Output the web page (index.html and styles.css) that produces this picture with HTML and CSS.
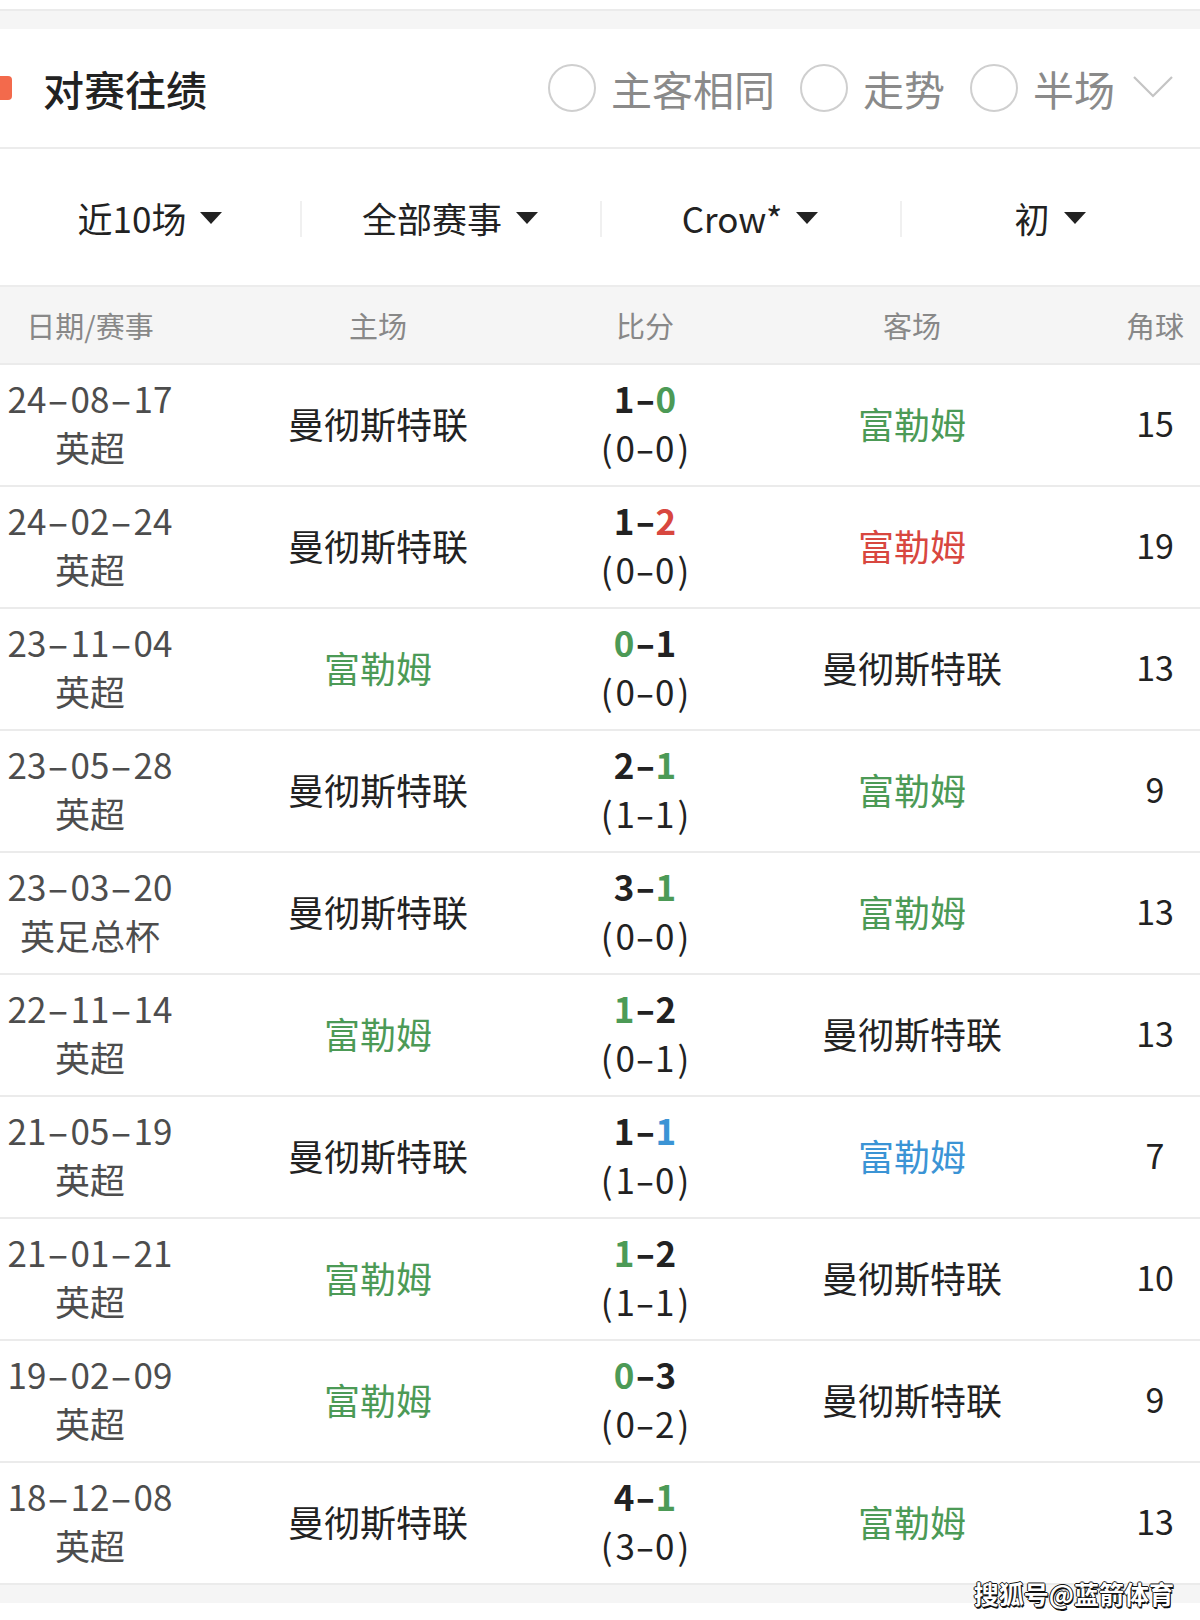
FILE: index.html
```html
<!DOCTYPE html>
<html lang="zh-CN">
<head>
<meta charset="utf-8">
<title>对赛往绩</title>
<link rel="stylesheet" href="styles.css">
</head>
<body>
<div class="page">
  <div class="top-white"></div>
  <div class="band"></div>

  <div class="header">
    <div class="title-wrap">
      <span class="marker"></span>
      <span class="title">对赛往绩</span>
    </div>
    <div class="options">
      <span class="radio"></span><span class="opt">主客相同</span>
      <span class="radio"></span><span class="opt">走势</span>
      <span class="radio"></span><span class="opt">半场</span>
      <svg class="chev" width="40" height="24" viewBox="0 0 40 24"><polyline points="1,2 20,21 39,2" fill="none" stroke="#c4c4c4" stroke-width="2.2"/></svg>
    </div>
  </div>

  <div class="filters">
    <div class="filter"><span>近10场</span><i class="tri"></i></div>
    <div class="filter div"><span>全部赛事</span><i class="tri"></i></div>
    <div class="filter div"><span>Crow*</span><i class="tri"></i></div>
    <div class="filter div"><span>初</span><i class="tri"></i></div>
  </div>

  <div class="thead">
    <div>日期/赛事</div><div>主场</div><div>比分</div><div>客场</div><div>角球</div>
  </div>

  <div class="tbody">
    <div class="row">
      <div class="date"><span>24<i>-</i>08<i>-</i>17</span><span>英超</span></div>
      <div class="team">曼彻斯特联</div>
      <div class="score"><b>1<i>-</i><em class="g">0</em></b><span>(0<i>-</i>0)</span></div>
      <div class="team g">富勒姆</div>
      <div class="corner">15</div>
    </div>
    <div class="row">
      <div class="date"><span>24<i>-</i>02<i>-</i>24</span><span>英超</span></div>
      <div class="team">曼彻斯特联</div>
      <div class="score"><b>1<i>-</i><em class="r">2</em></b><span>(0<i>-</i>0)</span></div>
      <div class="team r">富勒姆</div>
      <div class="corner">19</div>
    </div>
    <div class="row">
      <div class="date"><span>23<i>-</i>11<i>-</i>04</span><span>英超</span></div>
      <div class="team g">富勒姆</div>
      <div class="score"><b><em class="g">0</em><i>-</i>1</b><span>(0<i>-</i>0)</span></div>
      <div class="team">曼彻斯特联</div>
      <div class="corner">13</div>
    </div>
    <div class="row">
      <div class="date"><span>23<i>-</i>05<i>-</i>28</span><span>英超</span></div>
      <div class="team">曼彻斯特联</div>
      <div class="score"><b>2<i>-</i><em class="g">1</em></b><span>(1<i>-</i>1)</span></div>
      <div class="team g">富勒姆</div>
      <div class="corner">9</div>
    </div>
    <div class="row">
      <div class="date"><span>23<i>-</i>03<i>-</i>20</span><span>英足总杯</span></div>
      <div class="team">曼彻斯特联</div>
      <div class="score"><b>3<i>-</i><em class="g">1</em></b><span>(0<i>-</i>0)</span></div>
      <div class="team g">富勒姆</div>
      <div class="corner">13</div>
    </div>
    <div class="row">
      <div class="date"><span>22<i>-</i>11<i>-</i>14</span><span>英超</span></div>
      <div class="team g">富勒姆</div>
      <div class="score"><b><em class="g">1</em><i>-</i>2</b><span>(0<i>-</i>1)</span></div>
      <div class="team">曼彻斯特联</div>
      <div class="corner">13</div>
    </div>
    <div class="row">
      <div class="date"><span>21<i>-</i>05<i>-</i>19</span><span>英超</span></div>
      <div class="team">曼彻斯特联</div>
      <div class="score"><b>1<i>-</i><em class="b">1</em></b><span>(1<i>-</i>0)</span></div>
      <div class="team b">富勒姆</div>
      <div class="corner">7</div>
    </div>
    <div class="row">
      <div class="date"><span>21<i>-</i>01<i>-</i>21</span><span>英超</span></div>
      <div class="team g">富勒姆</div>
      <div class="score"><b><em class="g">1</em><i>-</i>2</b><span>(1<i>-</i>1)</span></div>
      <div class="team">曼彻斯特联</div>
      <div class="corner">10</div>
    </div>
    <div class="row">
      <div class="date"><span>19<i>-</i>02<i>-</i>09</span><span>英超</span></div>
      <div class="team g">富勒姆</div>
      <div class="score"><b><em class="g">0</em><i>-</i>3</b><span>(0<i>-</i>2)</span></div>
      <div class="team">曼彻斯特联</div>
      <div class="corner">9</div>
    </div>
    <div class="row">
      <div class="date"><span>18<i>-</i>12<i>-</i>08</span><span>英超</span></div>
      <div class="team">曼彻斯特联</div>
      <div class="score"><b>4<i>-</i><em class="g">1</em></b><span>(3<i>-</i>0)</span></div>
      <div class="team g">富勒姆</div>
      <div class="corner">13</div>
    </div>
  </div>

  <div class="bottom-band"></div>
  <div class="watermark">搜狐号@蓝箭体育</div>
</div>
</body>
</html>
```

FILE: styles.css
```css
* { box-sizing: border-box; }
html, body { margin: 0; padding: 0; background: #fff; }
body {
  font-family: "Noto Sans CJK SC", "Noto Sans", sans-serif;
  color: #222;
}
.page { position: relative; width: 1200px; height: 1620px; overflow: hidden; }

.top-white { height: 9px; background: #fff; }
.band { height: 20px; background: #f5f5f5; border-top: 2px solid #ebebeb; }

.header {
  height: 120px;
  display: flex;
  align-items: center;
  justify-content: space-between;
  border-bottom: 2px solid #ececec;
  padding-right: 27px;
}
.title-wrap { display: flex; align-items: center; }
.marker {
  width: 12px; height: 24px;
  background: #f36a4c;
  border-radius: 0 4px 4px 0;
  margin-right: 31px;
}
.title { font-size: 41px; font-weight: 500; color: #222; line-height: 1; }

.options { display: flex; align-items: center; }
.radio {
  width: 48px; height: 48px;
  border: 2px solid #cfcfcf;
  border-radius: 50%;
  margin-right: 15px;
}
.opt { font-size: 41px; color: #8a8a8a; line-height: 1; margin-right: 25px; }
.opt:last-of-type { margin-right: 18px; }
.chev { display: block; margin-top: -2px; }

.filters {
  height: 138px;
  display: grid;
  grid-template-columns: repeat(4, 1fr);
  border-bottom: 2px solid #ececec;
}
.filter {
  position: relative;
  display: flex;
  align-items: center;
  justify-content: center;
  font-size: 35px;
  color: #222;
}
.filter.div::before {
  content: "";
  position: absolute;
  left: 0; top: 52px;
  width: 2px; height: 36px;
  background: #f0f0f0;
}
.tri {
  width: 0; height: 0;
  border-left: 11px solid transparent;
  border-right: 11px solid transparent;
  border-top: 12px solid #222;
  margin-left: 14px;
  margin-top: 2px;
}

.thead, .row {
  display: grid;
  grid-template-columns: 180px 396px 138px 396px 90px;
}
.thead {
  height: 78px;
  background: #f5f5f5;
  align-items: center;
  font-size: 29px;
  color: #888;
  text-align: center;
  border-bottom: 2px solid #ebebeb;
}

.row {
  height: 122px;
  padding-bottom: 5px;
  border-bottom: 2px solid #ebebeb;
  align-items: center;
  text-align: center;
}
.date, .score { display: flex; flex-direction: column; align-items: center; }
.date span, .score b, .score span { line-height: 52px; display: block; white-space: nowrap; }
.date span { font-size: 35px; color: #4d4d4d; }
.date span + span { margin-top: -3px; }
.score span { margin-top: -3px; }
.date i, .score i {
  font-style: normal;
  display: inline-block;
  letter-spacing: 0;
}
.date i { margin: 0 6px; transform: scaleX(1.85); }
.team { font-size: 36px; color: #222; }
.score b { font-size: 35px; font-weight: 700; color: #222; }
.score b i { margin: 0 4px; transform: scaleX(1.6); }
.score span { font-size: 35px; color: #222; letter-spacing: 3px; margin-right: -3px; }
.score span i { margin: 0 4px 0 1px; transform: scaleX(1.6); }
.score em { font-style: normal; }
.corner { font-size: 34px; color: #222; }

.g { color: #4c9a56; }
.r { color: #d8473f; }
.b { color: #3b94d5; }

.bottom-band { height: 18px; background: #f5f5f5; }

.watermark {
  position: absolute;
  right: 26px;
  top: 1578px;
  font-size: 25px;
  font-weight: 700;
  color: #fff;
  line-height: 30px;
  text-shadow: -1px 0 0 #111, 1px 0 0 #111, 0 -1px 0 #111, 0 1px 0 #111, 1px 2px 0 #111;
}
```
